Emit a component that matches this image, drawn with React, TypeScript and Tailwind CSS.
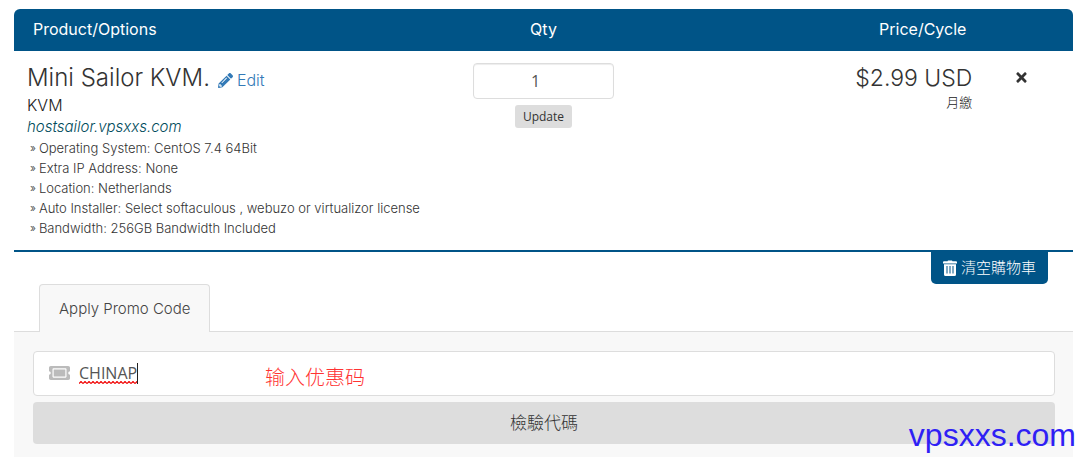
import { useState } from "react";
import { FaPencilAlt, FaTicketAlt, FaTimes } from "react-icons/fa";

const options = [
  "Operating System: CentOS 7.4 64Bit",
  "Extra IP Address: None",
  "Location: Netherlands",
  "Auto Installer: Select softaculous , webuzo or virtualizor license",
  "Bandwidth: 256GB Bandwidth Included",
];

function TrashIcon() {
  return (
    <svg viewBox="0 0 14 16" className="h-4 w-3.5" fill="currentColor" aria-hidden="true">
      <path
        fillRule="evenodd"
        d="M4.5 1.2 5 .5h4l.5.7H13a1 1 0 0 1 1 1V3.500H0V2.200a1 1 0 0 1 1-1ZM1 4.300h12V14.500a1.500 1.500 0 0 1-1.500 1.500h-9A1.500 1.500 0 0 1 1 14.500ZM3.500 6v7.500h1V6ZM6.500 6v7.500h1V6ZM9.500 6v7.500h1V6Z"
      />
    </svg>
  );
}

function CartTable() {
  const [qty, setQty] = useState("1");
  return (
    <table className="w-full table-fixed border-collapse">
      <colgroup>
        <col className="w-[42.5%]" />
        <col className="w-[15%]" />
        <col className="w-[33%]" />
        <col className="w-[9.5%]" />
      </colgroup>
      <thead>
        <tr className="h-[42px] text-[16px] leading-5 text-white">
          <th scope="col" className="rounded-tl-md bg-[#005487] px-[19px] pb-0.5 text-left font-normal">Product/Options</th>
          <th scope="col" className="bg-[#005487] pb-0.5 text-center font-normal">Qty</th>
          <th scope="col" className="bg-[#005487] pr-1.5 pb-0.5 text-right font-normal">Price/Cycle</th>
          <td className="rounded-tr-md bg-[#005487]" />
        </tr>
      </thead>
      <tbody>
        <tr className="border-b-2 border-[#005487] align-top">
          <td className="pt-[11px] pb-3 pl-[13px]">
            <div className="flex items-center gap-2 whitespace-nowrap">
              <h2 className="text-[24px] leading-8 font-light text-[#333]">Mini Sailor KVM.</h2>
              <a href="#edit" className="mt-1 flex items-center gap-1 text-[16px] leading-6 font-light text-[#337ab7]">
                <FaPencilAlt className="size-[15px]" />
                Edit
              </a>
            </div>
            <p className="text-[16px] leading-[22px] font-light text-[#222]">KVM</p>
            <p className="text-[15px] leading-[22px] font-light text-[#004c5c] italic">hostsailor.vpsxxs.com</p>
            <ul className="pl-[3px] text-[13px] leading-5 font-light whitespace-nowrap text-[#333]">
              {options.map((option) => (
                <li key={option} className="flex gap-[3px]">
                  <span className="text-[11px]">»</span>
                  {option}
                </li>
              ))}
            </ul>
          </td>
          <td className="px-[9px] pt-3">
            <div className="flex flex-col items-center gap-1.5">
              <input
                aria-label="Qty"
                value={qty}
                onChange={(e) => setQty(e.target.value)}
                className="h-9 w-full rounded border border-[#ddd] bg-white pr-4 pl-0 text-center font-['Open_Sans',sans-serif] text-[16px] text-[#555] shadow-[inset_0_1px_1px_rgba(0,0,0,0.075)]"
              />
              <button type="button" className="h-[23px] rounded-[3px] bg-[#ddd] px-2 font-['Open_Sans',sans-serif] text-[12px] leading-4 text-[#333]">
                Update
              </button>
            </div>
          </td>
          <td className="pt-[11px] text-right">
            <p className="text-[23px] leading-8 font-light text-[#333]">$2.99 USD</p>
            <p className="text-[13px] leading-4 font-light text-[#222]">月繳</p>
          </td>
          <td className="pt-[19px] text-center">
            <button type="button" aria-label="Remove" className="block pl-[42px] text-[#333]">
              <FaTimes className="size-[15px]" />
            </button>
          </td>
        </tr>
      </tbody>
    </table>
  );
}

function PromoPanel() {
  const [code, setCode] = useState("CHINAP");
  return (
    <section>
      <div className="flex pl-[25px]" role="tablist">
        <button
          type="button"
          role="tab"
          aria-selected="true"
          className="z-10 -mb-px h-[48px] rounded-t border border-b-0 border-[#ddd] bg-[#f8f8f8] px-[19px] text-[15px] leading-5 font-light whitespace-nowrap text-[#444]"
        >
          Apply Promo Code
        </button>
      </div>
      <form
        className="flex flex-col gap-1.5 border-t border-[#ddd] bg-[#f8f8f8] pt-[19px] pr-[18px] pb-[13px] pl-[19px]"
        onSubmit={(e) => e.preventDefault()}
      >
        <div className="relative">
          <label htmlFor="promo" aria-label="Apply Promo Code" className="absolute top-3 left-4 text-[#bbb]">
            <FaTicketAlt className="h-5 w-[21px]" />
          </label>
          <input
            id="promo"
            value={code}
            spellCheck={false}
            onChange={(e) => setCode(e.target.value)}
            className="block h-[45px] w-full rounded border border-[#ddd] bg-white pr-4 pb-0.5 pl-[45px] font-['Open_Sans',sans-serif] text-[16px] text-[#555]"
          />
          <svg className="absolute top-[30px] left-[46px] h-[3px] w-[58px]" aria-hidden="true">
            <defs>
              <pattern id="squiggle" width="4" height="3" patternUnits="userSpaceOnUse">
                <path d="M0 2.500 2 .5 4 2.500" fill="none" stroke="#f00000" strokeWidth="1.200" />
              </pattern>
            </defs>
            <rect width="58" height="3" fill="url(#squiggle)" />
          </svg>
          <span className="absolute top-3 left-[104px] h-[21px] w-px bg-[#222]" />
          <span className="pointer-events-none absolute top-3.5 left-[232px] font-['Noto_Sans_CJK_SC',sans-serif] text-[20px] leading-6 font-light text-[#ff3333]">
            输入优惠码
          </span>
        </div>
        <button type="submit" className="h-[42px] w-full rounded bg-[#ddd] text-[17px] leading-6 font-light text-[#333]">
          檢驗代碼
        </button>
      </form>
    </section>
  );
}

export default function App() {
  return (
    <main className="relative bg-white pt-[9px] pr-3 pl-3.5 font-['Inter','Noto_Sans_CJK_TC',sans-serif]">
      <CartTable />
      <div className="flex justify-end pr-[25px]">
        <button
          type="button"
          className="flex h-8 items-center gap-1 rounded-b-[5px] bg-[#005487] px-3 text-[15px] leading-5 font-light text-white"
        >
          <TrashIcon />
          清空購物車
        </button>
      </div>
      <PromoPanel />
      <span className="absolute right-[9px] bottom-1 font-['Liberation_Sans',sans-serif] text-[32px] leading-9 text-[#2f1ff5]">
        vpsxxs.com
      </span>
    </main>
  );
}
